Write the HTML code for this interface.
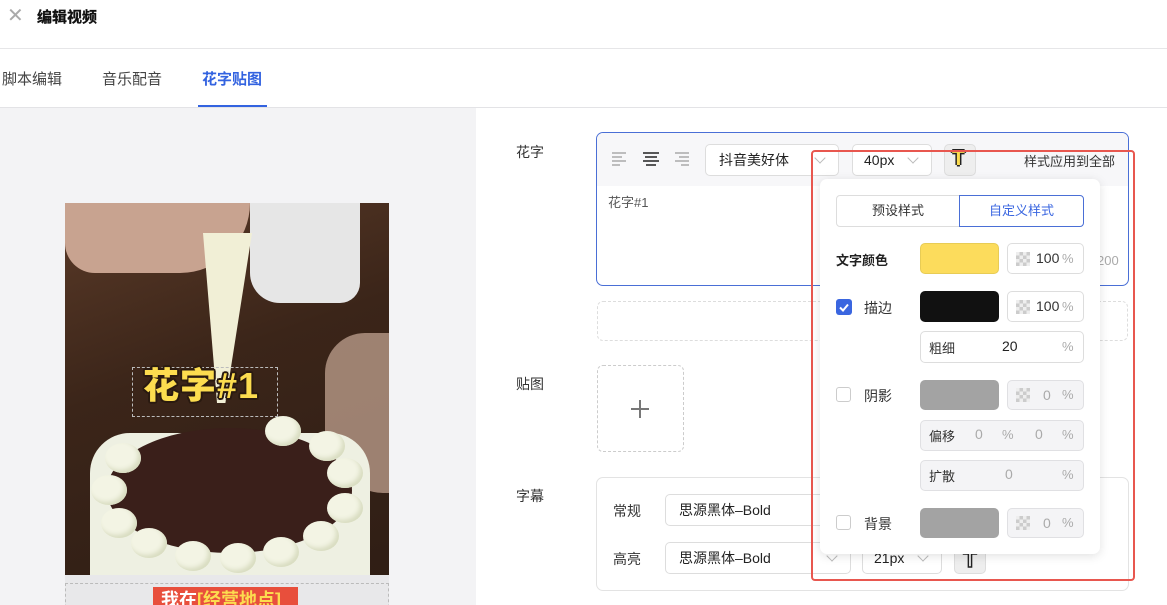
<!DOCTYPE html>
<html><head><meta charset="utf-8"><style>
*{box-sizing:border-box;margin:0;padding:0}
body{width:1167px;height:605px;overflow:hidden;background:#fff;font-family:"Liberation Sans","Noto Sans CJK SC",sans-serif;color:#333;position:relative;font-size:14px}
.a{position:absolute}
.lbl{font-size:14px;color:#333}
.sel{position:absolute;border:1px solid #ddd;border-radius:5px;background:#fff;font-size:14px;color:#222;padding-left:13px;display:flex;align-items:center}
.chev{position:absolute;width:8px;height:8px;border-right:1px solid #bbb;border-bottom:1px solid #bbb;transform:rotate(45deg)}
.box{position:absolute;border:1px solid #ddd;border-radius:5px;background:#fff}
.gbox{position:absolute;border:1px solid #e0e0e3;border-radius:5px;background:#f4f4f6}
.cb{position:absolute;width:15px;height:15px;border:1px solid #ccc;border-radius:3px;background:#fff}
.pct{position:absolute;font-size:13px;color:#aaa}
.chk{position:absolute;width:14px;height:14px;background:
conic-gradient(#ccc 25%,#eee 0 50%,#ccc 0 75%,#eee 0) 0 0/7px 7px}
.puff{position:absolute;width:36px;height:30px;border-radius:50%;background:#f3f4e4;box-shadow:inset -3px -3px 5px #d8dcc0}
</style></head><body>
<!-- header -->
<div class="a" style="left:7px;top:6px;font-size:20px;color:#aaa;line-height:20px">✕</div>
<div class="a" style="left:37px;top:6px;font-size:15px;font-weight:bold;color:#111;-webkit-text-stroke:0.3px #111">编辑视频</div>
<div class="a" style="left:0;top:48px;width:1167px;height:1px;background:#e6e6e8"></div>
<div class="a" style="left:2px;top:68px;font-size:15px;color:#444">脚本编辑</div>
<div class="a" style="left:102px;top:68px;font-size:15px;color:#444">音乐配音</div>
<div class="a" style="left:202px;top:68px;font-size:15px;color:#3363e0;font-weight:bold">花字贴图</div>
<div class="a" style="left:198px;top:105px;width:69px;height:3px;background:#3363e0"></div>
<div class="a" style="left:0;top:107px;width:1167px;height:1px;background:#e3e3e6"></div>
<!-- left panel -->
<div class="a" style="left:0;top:108px;width:476px;height:497px;background:#f3f3f5"></div>
<div class="a" style="left:65px;top:203px;width:324px;height:402px;overflow:hidden;background:#3b2519">
 <div class="a" style="left:0;top:0;width:324px;height:402px;background:linear-gradient(160deg,#5a3a28 0%,#3b2519 40%,#2e1d14 100%)"></div>
 <div class="a" style="left:185px;top:0;width:110px;height:100px;background:#e6e6e6;border-radius:0 0 20px 30px"></div>
 <div class="a" style="left:0;top:0;width:185px;height:70px;background:#c8a390;border-radius:0 0 70px 30px"></div>
 <div class="a" style="left:260px;top:130px;width:64px;height:160px;background:#b89a88;border-radius:40px 0 0 60px;opacity:.8"></div>
 <div class="a" style="left:117px;top:30px;width:70px;height:170px;background:#f1efd6;clip-path:polygon(30% 0,100% 0,62% 100%,50% 100%)"></div>
 <div class="a" style="left:25px;top:230px;width:280px;height:172px;background:#eef0e2;border-radius:40px 40px 0 0"></div>
 <div class="a" style="left:42px;top:225px;width:245px;height:125px;background:#3a1f1a;border-radius:50%"></div>
 <div class="puff" style="left:40px;top:240px"></div><div class="puff" style="left:26px;top:272px"></div><div class="puff" style="left:36px;top:305px"></div>
 <div class="puff" style="left:66px;top:325px"></div><div class="puff" style="left:110px;top:338px"></div><div class="puff" style="left:155px;top:340px"></div>
 <div class="puff" style="left:198px;top:334px"></div><div class="puff" style="left:238px;top:318px"></div><div class="puff" style="left:262px;top:290px"></div>
 <div class="puff" style="left:262px;top:255px"></div><div class="puff" style="left:244px;top:228px"></div><div class="puff" style="left:200px;top:213px"></div>
 <div class="a" style="left:0;top:372px;width:324px;height:30px;background:#e8e8ea"></div>
 <div class="a" style="left:67px;top:164px;width:146px;height:50px;border:1px dashed #bbb"></div>
 <div class="a" style="left:78px;top:154px;font-size:36px;font-weight:900;color:#fcdc4f;letter-spacing:1px;text-shadow:2px 0 #2a1a10,-2px 0 #2a1a10,0 2px #2a1a10,0 -2px #2a1a10,1.5px 1.5px #2a1a10,-1.5px -1.5px #2a1a10,1.5px -1.5px #2a1a10,-1.5px 1.5px #2a1a10">花字#1</div>
 <div class="a" style="left:0;top:380px;width:324px;height:30px;border:1px dashed #bbb"></div>
 <div class="a" style="left:88px;top:384px;width:145px;height:24px;background:#e84f3c;color:#fff;font-weight:bold;font-size:18px;padding-left:8px;line-height:26px">我在<span style="color:#fcdc4f">[经营地点]</span></div>
</div>
<!-- right labels -->
<div class="a lbl" style="left:516px;top:142px">花字</div>
<div class="a lbl" style="left:516px;top:374px">贴图</div>
<div class="a lbl" style="left:516px;top:486px">字幕</div>
<!-- text box -->
<div class="a" style="left:596px;top:132px;width:533px;height:154px;border:1px solid #4a6fd6;border-radius:7px;overflow:hidden">
 <div class="a" style="left:0;top:0;width:533px;height:53px;background:#f7f7f9"></div>
 <div class="a" style="left:11px;top:59px;font-size:13px;color:#555">花字#1</div>
 <div class="a" style="left:500px;top:120px;font-size:13px;color:#aaa">200</div>
</div>
<!-- align icons -->
<svg class="a" style="left:610px;top:152px" width="80" height="14">
<g stroke="#aaa" stroke-width="1.5"><path d="M2 1h14M2 5h10M2 9h14M2 13h8"/></g>
<g stroke="#222" stroke-width="1.6"><path d="M33 1h16M35 5h12M33 9h16M36 13h10"/></g>
<g stroke="#aaa" stroke-width="1.5"><path d="M65 1h14M69 5h10M65 9h14M71 13h8"/></g>
</svg>
<div class="sel" style="left:705px;top:144px;width:134px;height:32px">抖音美好体<div class="chev" style="left:110px;top:9px"></div></div>
<div class="sel" style="left:852px;top:144px;width:80px;height:32px;padding-left:11px">40px<div class="chev" style="left:56px;top:9px"></div></div>
<div class="a" style="left:944px;top:144px;width:32px;height:32px;border:1px solid #ddd;border-radius:5px;background:#eee"></div>
<div class="a" style="left:952px;top:147px;font-size:21px;font-weight:900;color:#fcdc4f;text-shadow:1.5px 0 #222,-1.5px 0 #222,0 1.5px #222,0 -1.5px #222">T</div>
<div class="a" style="left:1024px;top:151px;font-size:13px;color:#333">样式应用到全部</div>
<!-- dashed -->
<div class="a" style="left:597px;top:301px;width:531px;height:40px;border:1px dashed #ddd;border-radius:6px"></div>
<div class="a" style="left:597px;top:365px;width:87px;height:87px;border:1px dashed #ccc;border-radius:6px"></div>
<div class="a" style="left:631px;top:408px;width:18px;height:1.5px;background:#777"></div>
<div class="a" style="left:639px;top:400px;width:1.5px;height:18px;background:#777"></div>
<!-- subtitles -->
<div class="a" style="left:596px;top:477px;width:533px;height:114px;border:1px solid #e3e3e3;border-radius:7px"></div>
<div class="a lbl" style="left:613px;top:501px">常规</div>
<div class="a lbl" style="left:613px;top:549px">高亮</div>
<div class="sel" style="left:665px;top:494px;width:186px;height:32px">思源黑体–Bold</div>
<div class="sel" style="left:665px;top:542px;width:186px;height:32px">思源黑体–Bold<div class="chev" style="left:162px;top:9px"></div></div>
<div class="sel" style="left:862px;top:542px;width:80px;height:32px;padding-left:11px">21px<div class="chev" style="left:56px;top:9px"></div></div>
<div class="a" style="left:954px;top:542px;width:32px;height:32px;border:1px solid #ddd;border-radius:5px;background:#eee;font-size:22px;font-weight:bold;text-align:center;color:#fff;-webkit-text-stroke:1.5px #222;line-height:34px">T</div>
<!-- red box -->
<div class="a" style="left:811px;top:150px;width:324px;height:431px;border:2.5px solid #e8574f;border-radius:4px"></div>
<!-- popup -->
<div class="a" style="left:820px;top:179px;width:280px;height:375px;background:#fff;border-radius:7px;box-shadow:0 2px 10px rgba(0,0,0,.12)"></div>
<div class="a" style="left:836px;top:195px;width:124px;height:32px;border:1px solid #ddd;border-radius:4px 0 0 4px;font-size:13px;text-align:center;line-height:30px;color:#333">预设样式</div>
<div class="a" style="left:959px;top:195px;width:125px;height:32px;border:1px solid #4a6fd6;border-radius:0 4px 4px 0;font-size:13px;text-align:center;line-height:30px;color:#3a66e0">自定义样式</div>
<div class="a" style="left:836px;top:250px;font-size:13px;font-weight:bold;color:#222">文字颜色</div>
<div class="a" style="left:920px;top:243px;width:79px;height:31px;background:#fcdc5c;border:1px solid #e8cc55;border-radius:5px"></div>
<div class="box" style="left:1007px;top:243px;width:77px;height:31px"></div><div class="chk" style="left:1016px;top:252px"></div><div class="a" style="left:1036px;top:250px;font-size:14px;color:#333">100</div><div class="pct" style="left:1062px;top:251px">%</div>

<div class="a" style="left:836px;top:299px;width:16px;height:16px;background:#3a66e0;border-radius:3px"></div>
<svg class="a" style="left:836px;top:299px" width="16" height="16"><path d="M4 8.5l3 3 5-6" stroke="#fff" stroke-width="2" fill="none"/></svg>
<div class="a" style="left:864px;top:298px;font-size:14px;color:#333">描边</div>
<div class="a" style="left:920px;top:291px;width:79px;height:31px;background:#111;border-radius:5px"></div>
<div class="box" style="left:1007px;top:291px;width:77px;height:31px"></div><div class="chk" style="left:1016px;top:300px"></div><div class="a" style="left:1036px;top:298px;font-size:14px;color:#333">100</div><div class="pct" style="left:1062px;top:299px">%</div>
<div class="box" style="left:920px;top:331px;width:164px;height:32px"></div>
<div class="a" style="left:929px;top:338px;font-size:13px;color:#333">粗细</div>
<div class="a" style="left:1002px;top:338px;font-size:14px;color:#222">20</div>
<div class="pct" style="left:1062px;top:339px">%</div>

<div class="cb" style="left:836px;top:387px"></div>
<div class="a" style="left:864px;top:386px;font-size:14px;color:#333">阴影</div>
<div class="a" style="left:920px;top:380px;width:79px;height:30px;background:#a3a3a3;border-radius:5px"></div>
<div class="gbox" style="left:1007px;top:380px;width:77px;height:30px"></div><div class="chk" style="left:1016px;top:388px"></div><div class="pct" style="left:1043px;top:387px;font-size:14px">0</div><div class="pct" style="left:1062px;top:387px">%</div>
<div class="gbox" style="left:920px;top:420px;width:164px;height:31px"></div>
<div class="a" style="left:929px;top:426px;font-size:13px;color:#333">偏移</div>
<div class="pct" style="left:975px;top:426px;font-size:14px">0</div><div class="pct" style="left:1002px;top:427px">%</div>
<div class="pct" style="left:1035px;top:426px;font-size:14px">0</div><div class="pct" style="left:1062px;top:427px">%</div>
<div class="gbox" style="left:920px;top:460px;width:164px;height:31px"></div>
<div class="a" style="left:929px;top:466px;font-size:13px;color:#333">扩散</div>
<div class="pct" style="left:1005px;top:466px;font-size:14px">0</div><div class="pct" style="left:1062px;top:467px">%</div>

<div class="cb" style="left:836px;top:515px"></div>
<div class="a" style="left:864px;top:514px;font-size:14px;color:#333">背景</div>
<div class="a" style="left:920px;top:508px;width:79px;height:30px;background:#a3a3a3;border-radius:5px"></div>
<div class="gbox" style="left:1007px;top:508px;width:77px;height:30px"></div><div class="chk" style="left:1016px;top:516px"></div><div class="pct" style="left:1043px;top:515px;font-size:14px">0</div><div class="pct" style="left:1062px;top:515px">%</div>
</body></html>
